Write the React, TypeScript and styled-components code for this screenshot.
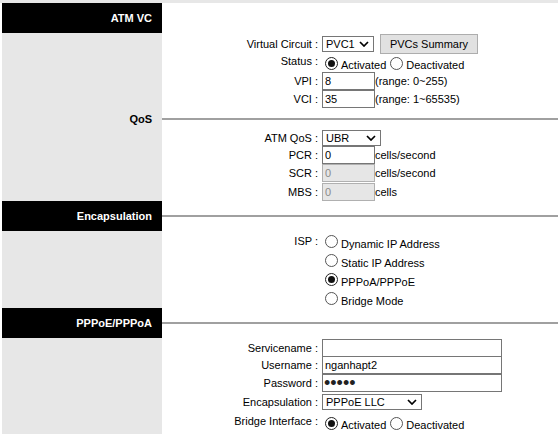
import styled, { createGlobalStyle } from "styled-components";

const GlobalStyle = createGlobalStyle`
  html, body {
    margin: 0;
    padding: 0;
    background: #fff;
  }
  body {
    font-family: "Liberation Sans", Arial, sans-serif;
    font-size: 11px;
    color: #000;
  }
`;

const Page = styled.div`
  width: 558px;
  height: 434px;
  overflow: hidden;
  border-top: 3px solid #e7e7e7;
  padding-left: 2px;
  box-sizing: border-box;
`;

const Section = styled.div`
  display: grid;
  grid-template-columns: 160px 1fr;
`;

const SideHead = styled.div<{ $dark?: boolean; $h: number }>`
  height: ${(p) => p.$h}px;
  background: ${(p) => (p.$dark ? "#000" : "#e7e7e7")};
  color: ${(p) => (p.$dark ? "#fff" : "#000")};
  font-weight: bold;
  display: flex;
  align-items: center;
  justify-content: flex-end;
  padding-right: 10px;
  box-sizing: border-box;
`;

const MainHead = styled.div<{ $rule?: boolean }>`
  display: flex;
  align-items: center;
  &::after {
    content: "";
    display: ${(p) => (p.$rule ? "block" : "none")};
    width: 100%;
    height: 2px;
    background: #a0a0a0;
  }
`;

const Side = styled.div`
  background: #e7e7e7;
`;

const Main = styled.div<{ $pt?: number }>`
  padding-top: ${(p) => p.$pt ?? 0}px;
`;

const Row = styled.div<{ $h: number }>`
  display: grid;
  grid-template-columns: 156px 1fr;
  column-gap: 4px;
  height: ${(p) => p.$h}px;
  align-items: center;
`;

const Label = styled.div<{ $up?: number }>`
  text-align: right;
  white-space: nowrap;
  position: relative;
  top: ${(p) => -(p.$up ?? 0)}px;
`;

const Field = styled.div`
  display: flex;
  align-items: center;
  white-space: nowrap;
`;

const Input = styled.input<{ $w: number }>`
  width: ${(p) => p.$w}px;
  height: 18px;
  box-sizing: border-box;
  border: 1px solid #767676;
  padding: 0 2px;
  margin: 0;
  font: 11px "Liberation Sans", Arial, sans-serif;
  color: #000;
  background: #fff;
  outline: none;
  &:disabled {
    background: #e6e6e6;
    border-color: #b0b0b0;
    color: #8a8a8a;
  }
  &[type="password"] {
    font-size: 18px;
    line-height: 16px;
    padding: 0 1px;
    color: #222;
  }
`;

const SelectBox = styled.div<{ $w: number }>`
  width: ${(p) => p.$w}px;
  height: 16px;
  box-sizing: border-box;
  border: 1px solid #767676;
  background: #fff;
  display: flex;
  align-items: center;
  justify-content: space-between;
  padding: 0 4px 0 3px;
  line-height: 14px;
`;

const Button = styled.div`
  width: 98px;
  height: 20px;
  box-sizing: border-box;
  margin-left: 6px;
  border: 1px solid #adadad;
  background: #e1e1e1;
  display: flex;
  align-items: center;
  justify-content: center;
`;

const RadioOpt = styled.label`
  display: inline-flex;
  align-items: center;
  margin-left: 3px;
  margin-right: 1px;
`;

const Circle = styled.span<{ $on?: boolean }>`
  width: 13px;
  height: 13px;
  box-sizing: border-box;
  border-radius: 50%;
  border: 1px solid ${(p) => (p.$on ? "#222" : "#555")};
  background: #fff;
  display: inline-flex;
  align-items: center;
  justify-content: center;
  margin-right: 3px;
  &::after {
    content: "";
    display: ${(p) => (p.$on ? "block" : "none")};
    width: 7px;
    height: 7px;
    border-radius: 50%;
    background: #111;
  }
`;

const RadioText = styled.span`
  position: relative;
  top: 2px;
`;

const Chevron = () => (
  <svg width="10" height="6" viewBox="0 0 10 6">
    <path d="M1 1 L5 5 L9 1" fill="none" stroke="#000" strokeWidth="1.7" />
  </svg>
);

const Select = ({ w, value }: { w: number; value: string }) => (
  <SelectBox $w={w}>
    <span>{value}</span>
    <Chevron />
  </SelectBox>
);

const Radio = ({ on, children }: { on?: boolean; children: string }) => (
  <RadioOpt>
    <Circle $on={on} />
    <RadioText>{children}</RadioText>
  </RadioOpt>
);

export default function App() {
  return (
    <>
      <GlobalStyle />
      <Page>
        <Section>
          <SideHead $dark $h={30}>ATM VC</SideHead>
          <MainHead />
          <Side />
          <Main>
            <Row $h={21}>
              <Label>Virtual Circuit :</Label>
              <Field>
                <Select w={52} value="PVC1" />
                <Button>PVCs Summary</Button>
              </Field>
            </Row>
            <Row $h={18}>
              <Label $up={2}>Status :</Label>
              <Field>
                <Radio on>Activated</Radio>
                <Radio>Deactivated</Radio>
              </Field>
            </Row>
            <Row $h={18}>
              <Label>VPI :</Label>
              <Field>
                <Input $w={53} defaultValue="8" readOnly />
                (range: 0~255)
              </Field>
            </Row>
            <Row $h={18}>
              <Label>VCI :</Label>
              <Field>
                <Input $w={53} defaultValue="35" readOnly />
                (range: 1~65535)
              </Field>
            </Row>
          </Main>
        </Section>

        <Section>
          <SideHead $h={21}>QoS</SideHead>
          <MainHead $rule />
          <Side />
          <Main>
            <Row $h={17}>
              <Label>ATM QoS :</Label>
              <Field>
                <Select w={59} value="UBR" />
              </Field>
            </Row>
            <Row $h={18}>
              <Label>PCR :</Label>
              <Field>
                <Input $w={53} defaultValue="0" readOnly />
                cells/second
              </Field>
            </Row>
            <Row $h={18}>
              <Label>SCR :</Label>
              <Field>
                <Input $w={53} defaultValue="0" disabled />
                cells/second
              </Field>
            </Row>
            <Row $h={19}>
              <Label>MBS :</Label>
              <Field>
                <Input $w={53} defaultValue="0" disabled />
                cells
              </Field>
            </Row>
          </Main>
        </Section>

        <Section>
          <SideHead $dark $h={30}>Encapsulation</SideHead>
          <MainHead $rule />
          <Side />
          <Main $pt={1}>
            <Row $h={19}>
              <Label $up={1}>ISP :</Label>
              <Field>
                <Radio>Dynamic IP Address</Radio>
              </Field>
            </Row>
            <Row $h={19}>
              <Label />
              <Field>
                <Radio>Static IP Address</Radio>
              </Field>
            </Row>
            <Row $h={19}>
              <Label />
              <Field>
                <Radio on>PPPoA/PPPoE</Radio>
              </Field>
            </Row>
            <Row $h={19}>
              <Label />
              <Field>
                <Radio>Bridge Mode</Radio>
              </Field>
            </Row>
          </Main>
        </Section>

        <Section>
          <SideHead $dark $h={30}>PPPoE/PPPoA</SideHead>
          <MainHead $rule />
          <Side />
          <Main $pt={1}>
            <Row $h={17}>
              <Label>Servicename :</Label>
              <Field>
                <Input $w={180} defaultValue="" readOnly />
              </Field>
            </Row>
            <Row $h={18}>
              <Label>Username :</Label>
              <Field>
                <Input $w={180} defaultValue="nganhapt2" readOnly />
              </Field>
            </Row>
            <Row $h={18}>
              <Label>Password :</Label>
              <Field>
                <Input $w={180} type="password" defaultValue="abcde" readOnly />
              </Field>
            </Row>
            <Row $h={20}>
              <Label>Encapsulation :</Label>
              <Field>
                <Select w={100} value="PPPoE LLC" />
              </Field>
            </Row>
            <Row $h={22}>
              <Label $up={2}>Bridge Interface :</Label>
              <Field>
                <Radio on>Activated</Radio>
                <Radio>Deactivated</Radio>
              </Field>
            </Row>
          </Main>
        </Section>
      </Page>
    </>
  );
}
